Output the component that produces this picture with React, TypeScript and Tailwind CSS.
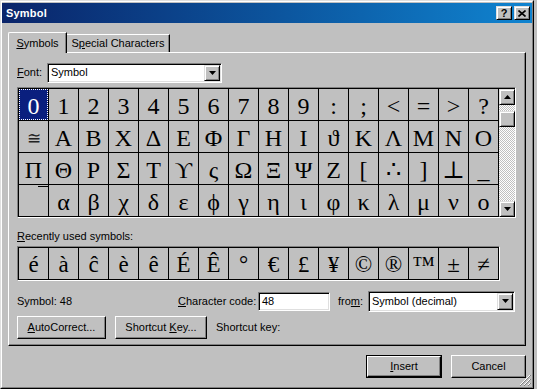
import React from 'react';

const rows: string[][] = [
  ['0', '1', '2', '3', '4', '5', '6', '7', '8', '9', ':', ';', '<', '=', '>', '?'],
  ['≅', 'Α', 'Β', 'Χ', 'Δ', 'Ε', 'Φ', 'Γ', 'Η', 'Ι', 'ϑ', 'Κ', 'Λ', 'Μ', 'Ν', 'Ο'],
  ['Π', 'Θ', 'Ρ', 'Σ', 'Τ', 'ϒ', 'ς', 'Ω', 'Ξ', 'Ψ', 'Ζ', '[', '∴', ']', '⊥', '_'],
  ['', 'α', 'β', 'χ', 'δ', 'ε', 'ϕ', 'γ', 'η', 'ι', 'φ', 'κ', 'λ', 'μ', 'ν', 'ο'],
];

const recent = ['é', 'à', 'ĉ', 'è', 'ê', 'É', 'Ê', '°', '€', '£', '¥', '©', '®', '™', '±', '≠'];

const DownTri = () => (
  <svg width="7" height="4" viewBox="0 0 7 4">
    <path d="M0 0h7L3.5 4z" fill="#000" />
  </svg>
);
const UpTri = () => (
  <svg width="7" height="4" viewBox="0 0 7 4">
    <path d="M0 4h7L3.5 0z" fill="#000" />
  </svg>
);

function SmallBtn({ children, cls }: { children?: React.ReactNode; cls: string }) {
  return (
    <div
      className={
        'flex items-center justify-center bg-[#c0c0c0] border border-t-[#dfdfdf] border-l-[#dfdfdf] border-r-black border-b-black shadow-[inset_1px_1px_#ffffff,inset_-1px_-1px_#808080] ' +
        cls
      }
    >
      {children}
    </div>
  );
}

function Combo({ text, cls }: { text: string; cls: string }) {
  return (
    <div
      className={
        'flex bg-white border border-t-[#808080] border-l-[#808080] border-r-white border-b-white shadow-[inset_1px_1px_#000000,inset_-1px_-1px_#dfdfdf] p-[1px] ' +
        cls
      }
    >
      <div className="flex-1 flex items-center pl-[2px] text-[11px]">{text}</div>
      <SmallBtn cls="w-[16px] h-full">
        <DownTri />
      </SmallBtn>
    </div>
  );
}

function PushBtn({ children, cls }: { children: React.ReactNode; cls: string }) {
  return (
    <div
      className={
        'flex items-center justify-center h-[23px] bg-[#c0c0c0] border border-t-white border-l-white border-r-black border-b-black shadow-[inset_-1px_-1px_#808080] text-[11px] ' +
        cls
      }
    >
      {children}
    </div>
  );
}

function SymCell({ ch, sel, ext }: { ch: string; sel?: boolean; ext?: boolean }) {
  const small = ch === '≅';
  return (
    <div className="relative w-[30px] h-[32px] border-r border-b border-black">
      {sel ? (
        <div className="w-full h-full bg-[#0a1f7e] text-white outline outline-1 outline-dotted outline-white -outline-offset-1 flex items-center justify-center text-[24px] leading-none font-['Liberation_Serif','DejaVu_Serif',serif] pt-[2px]">
          {ch}
        </div>
      ) : small ? (
        <div className="w-full h-full flex items-center justify-center text-[17px] leading-none font-['DejaVu_Sans',sans-serif] font-light text-[#222] pt-[3px]">
          {ch}
        </div>
      ) : (
        <div className="w-full h-full flex items-center justify-center text-[24px] leading-none font-['Liberation_Serif','DejaVu_Serif',serif] pt-[2px]">
          {ch}
        </div>
      )}
      {ext && <div className="absolute top-[1px] right-0 w-[10px] h-[1px] bg-black" />}
    </div>
  );
}

export default function App() {
  return (
    <div className="w-[537px] h-[389px] bg-[#c0c0c0] overflow-hidden font-['Liberation_Sans',Arial,sans-serif] text-[11px] text-black">
      <div className="w-[534px] h-[389px] border border-t-[#dfdfdf] border-l-[#dfdfdf] border-r-black border-b-black">
        <div className="relative h-full border border-t-white border-l-white border-r-[#808080] border-b-[#808080] pt-[1px] flex flex-col">
          {/* Title bar */}
          <div className="h-[20px] flex items-center justify-between pl-[4px] pr-[2px] bg-linear-to-r from-[#0a246a] to-[#1084d0]">
            <span className="text-white font-bold text-[11px] tracking-[0.2px]">Symbol</span>
            <div className="flex items-center gap-[2px]">
              <SmallBtn cls="w-[16px] h-[14px]">
                <span className="font-bold text-[11px] leading-none text-black">?</span>
              </SmallBtn>
              <SmallBtn cls="w-[16px] h-[14px]">
                <svg width="8" height="7" viewBox="0 0 8 7">
                  <path d="M0.5 0.5L7.5 6.5M7.5 0.5L0.5 6.5" stroke="#000" strokeWidth="1.6" />
                </svg>
              </SmallBtn>
            </div>
          </div>

          {/* Tabs */}
          <div className="mt-[9px] h-[20px] flex items-end pl-[6px]">
            <div className="relative z-10 -mb-[1px] h-[21px] w-[59px] bg-[#c0c0c0] rounded-tl-[2px] border-l border-t border-white border-r border-r-black shadow-[inset_-1px_0_#808080] flex items-center justify-center text-[11px]">
              <span>
                <span className="underline">S</span>ymbols
              </span>
            </div>
            <div className="h-[18px] w-[103px] bg-[#c0c0c0] border-t border-white border-r border-r-black shadow-[inset_-1px_0_#808080] flex items-center justify-center text-[11px]">
              <span>
                S<span className="underline">p</span>ecial Characters
              </span>
            </div>
          </div>

          {/* Panel */}
          <div className="mx-[6px] h-[294px] border border-t-white border-l-white border-r-black border-b-black shadow-[inset_-1px_-1px_#808080] pl-[8px] pt-[9px] flex flex-col">
            <div className="h-[21px] flex items-center">
              <div className="w-[30px]">
                <span className="underline">F</span>ont:
              </div>
              <Combo text="Symbol" cls="w-[175px] h-[20px]" />
            </div>

            {/* Symbol grid */}
            <div className="mt-[4px] w-[499px] border border-t-[#808080] border-l-[#808080] border-r-white border-b-white">
              <div className="flex border-t border-l border-black">
                <div className="grid grid-cols-[repeat(16,30px)]">
                  {rows.map((r, ri) =>
                    r.map((ch, ci) => (
                      <SymCell
                        key={ri + '-' + ci}
                        ch={ch}
                        sel={ri === 0 && ci === 0}
                        ext={ri === 3 && ci === 0}
                      />
                    ))
                  )}
                </div>
                <div className="w-[16px] h-[128px] flex flex-col">
                  <SmallBtn cls="w-[16px] h-[16px]">
                    <UpTri />
                  </SmallBtn>
                  <div className="h-[6px] bg-[image:repeating-conic-gradient(#ffffff_0%_25%,#c0c0c0_0%_50%)] bg-[length:2px_2px]" />
                  <SmallBtn cls="w-[16px] h-[16px]" />
                  <div className="flex-1 bg-[image:repeating-conic-gradient(#ffffff_0%_25%,#c0c0c0_0%_50%)] bg-[length:2px_2px]" />
                  <SmallBtn cls="w-[16px] h-[16px]">
                    <DownTri />
                  </SmallBtn>
                </div>
              </div>
            </div>

            <div className="mt-[10px] h-[17px] leading-[17px]">
              <span className="underline">R</span>ecently used symbols:
            </div>

            {/* Recent box */}
            <div className="mt-[1px] w-[483px] border border-t-[#808080] border-l-[#808080] border-r-white border-b-white">
              <div className="flex border-t border-l border-black">
                {recent.map((ch, i) => (
                  <div
                    key={i}
                    className="w-[30px] h-[32px] border-r border-b border-black flex items-center justify-center text-[23px] leading-none font-['Liberation_Serif','DejaVu_Serif',serif] pt-[1px]"
                  >
                    {ch}
                  </div>
                ))}
              </div>
            </div>

            {/* Info row */}
            <div className="mt-[9px] h-[22px] flex items-center">
              <div className="w-[161px]">Symbol: 48</div>
              <div className="w-[80px]">
                <span className="underline">C</span>haracter code:
              </div>
              <div className="w-[72px] h-[19px] bg-white border border-t-[#808080] border-l-[#808080] border-r-white border-b-white shadow-[inset_1px_1px_#000000,inset_-1px_-1px_#dfdfdf] flex items-center pl-[3px]">
                48
              </div>
              <div className="ml-[8px] w-[30px]">
                fro<span className="underline">m</span>:
              </div>
              <Combo text="Symbol (decimal)" cls="w-[147px] h-[21px]" />
            </div>

            {/* Buttons row */}
            <div className="mt-[4px] h-[23px] flex items-center">
              <PushBtn cls="w-[89px]">
                <span>
                  <span className="underline">A</span>utoCorrect...
                </span>
              </PushBtn>
              <PushBtn cls="ml-[9px] w-[92px]">
                <span>
                  Shortcut <span className="underline">K</span>ey...
                </span>
              </PushBtn>
              <div className="ml-[9px]">Shortcut key:</div>
            </div>
          </div>

          {/* Dialog buttons */}
          <div className="mt-[9px] h-[23px] flex justify-end gap-[9px] pr-[6px]">
            <div className="w-[76px] h-[23px] border border-black">
              <div className="w-full h-full flex items-center justify-center bg-[#c0c0c0] border border-t-white border-l-white border-r-black border-b-black shadow-[inset_-1px_-1px_#808080]">
                <span>
                  <span className="underline">I</span>nsert
                </span>
              </div>
            </div>
            <PushBtn cls="w-[75px]">Cancel</PushBtn>
          </div>

          {/* resize grip */}
          <svg className="absolute right-[1px] bottom-[1px]" width="12" height="12" viewBox="0 0 12 12">
            <path d="M11 1L1 11M11 5L5 11M11 9L9 11" stroke="#ffffff" strokeWidth="1" />
            <path d="M12 1L1 12M12 5L5 12M12 9L9 12" stroke="#808080" strokeWidth="1" />
          </svg>
        </div>
      </div>
    </div>
  );
}
